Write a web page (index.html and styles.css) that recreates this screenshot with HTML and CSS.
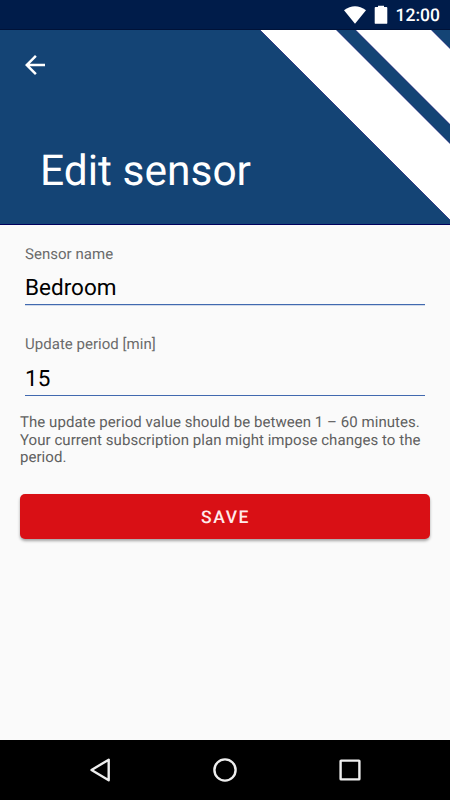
FILE: index.html
```html
<!DOCTYPE html>
<html lang="en">
<head>
<meta charset="utf-8">
<title>Edit sensor</title>
<link rel="stylesheet" href="styles.css">
</head>
<body>
<div class="screen">
  <div class="status">
    <svg class="wifi" width="24" height="20" viewBox="0 0 24 20"><path d="M12 18.700 1 5.200Q12-2.600 23 5.200Z" fill="#fff"/></svg>
    <svg class="battery" width="14" height="20" viewBox="0 0 14 20"><path d="M1.600 2H4V.8h6V2h2.400q.9 0 .9.9v15q0 .9-.9.9H1.600q-.9 0-.9-.9V2.900Q.7 2 1.600 2Z" fill="#fff"/></svg>
    <span class="clock">12:00</span>
  </div>
  <header class="header">
    <svg class="stripes" width="190" height="194" viewBox="0 0 190 194"><path d="M-2-2H74.500L192 115.500V192Z M93.500-2H169.500L192 20.500V96.500Z" fill="#fff" stroke="#00006a" stroke-width=".6"/></svg>
    <svg class="back" width="30" height="30" viewBox="0 0 24 24"><path d="M20 11H7.830l5.590-5.590L12 4l-8 8 8 8 1.410-1.410L7.830 13H20v-2z" fill="#fff"/></svg>
    <h1 class="title">Edit sensor</h1>
  </header>
  <main class="form">
    <label class="field"><span class="label">Sensor name</span><input class="input" type="text" value="Bedroom"></label>
    <label class="field field-period"><span class="label">Update period [min]</span><input class="input" type="text" value="15"></label>
    <p class="hint">The update period value should be between 1 – 60 minutes.<br>Your current subscription plan might impose changes to the<br>period.</p>
    <button class="save" type="button">SAVE</button>
  </main>
  <nav class="nav">
    <svg width="30" height="30" viewBox="0 0 30 30"><path d="M18.700 4.700V25.300L1.500 15Z" class="outline" transform="translate(5 0)"/></svg>
    <svg width="30" height="30" viewBox="0 0 30 30"><circle cx="15" cy="15" r="10.600" class="outline"/></svg>
    <svg width="30" height="30" viewBox="0 0 30 30"><rect x="5.600" y="5.600" width="18.800" height="18.800" rx=".5" class="outline"/></svg>
  </nav>
</div>
</body>
</html>
```
FILE: styles.css
```css
* { box-sizing: border-box; }
body { margin: 0; font-family: Roboto, sans-serif; text-rendering: geometricPrecision; }
.screen { width: 450px; height: 800px; display: flex; flex-direction: column; background: #fafafa; overflow: hidden; }
.status { height: 30px; background: #001c4a; display: flex; justify-content: flex-end; align-items: flex-start; padding: 5px 10px 0 0; color: #fff; border-bottom: 1px solid #001238; }
.battery { margin: 0 8px 0 7px; }
.clock { font-size: 17.5px; line-height: 22px; font-weight: 500; }
.header { position: relative; height: 195px; background: #144475; border-bottom: 1px solid #00005c; padding: 20px 20px 0; color: #fff; }
.stripes { position: absolute; top: 0; right: 0; }
.back { display: block; }
.title { margin: 67px 0 0 20px; font-size: 42.5px; line-height: 50px; font-weight: 400; }
.form { flex: 1; padding: 20px; }
.field { display: block; height: 90px; padding: 0 5px; }
.label { display: block; font-size: 15px; line-height: 18px; color: #6b6b6b; letter-spacing: .03px; }
.input { display: block; width: 100%; height: 42px; border: 0; border-bottom: 1px solid #4169af; border-radius: 0; padding: 9px 0 0; background: transparent; color: #000; font: 22.5px Roboto, sans-serif; outline: 0; text-rendering: inherit; box-shadow: 0 1px #d0d9e9; }
.field-period .input { height: 43px; box-shadow: none; }
.hint { margin: -11px 0 27px; font-size: 15px; line-height: 17.5px; color: #606060; letter-spacing: .05px; }
.save { display: block; width: 100%; height: 45px; border: 0; border-radius: 5px; background: #d91015; color: #ffebeb; font: 500 17.5px Roboto, sans-serif; letter-spacing: 1.56px; padding: 3px 0 0 1px; box-shadow: 0 2px 3px rgba(0,0,0,.35); text-rendering: inherit; }
.nav { height: 60px; background: #000; display: flex; justify-content: center; align-items: center; gap: 95px; }
.outline { fill: none; stroke: #eee; stroke-width: 2.4; stroke-linejoin: round; }
```
